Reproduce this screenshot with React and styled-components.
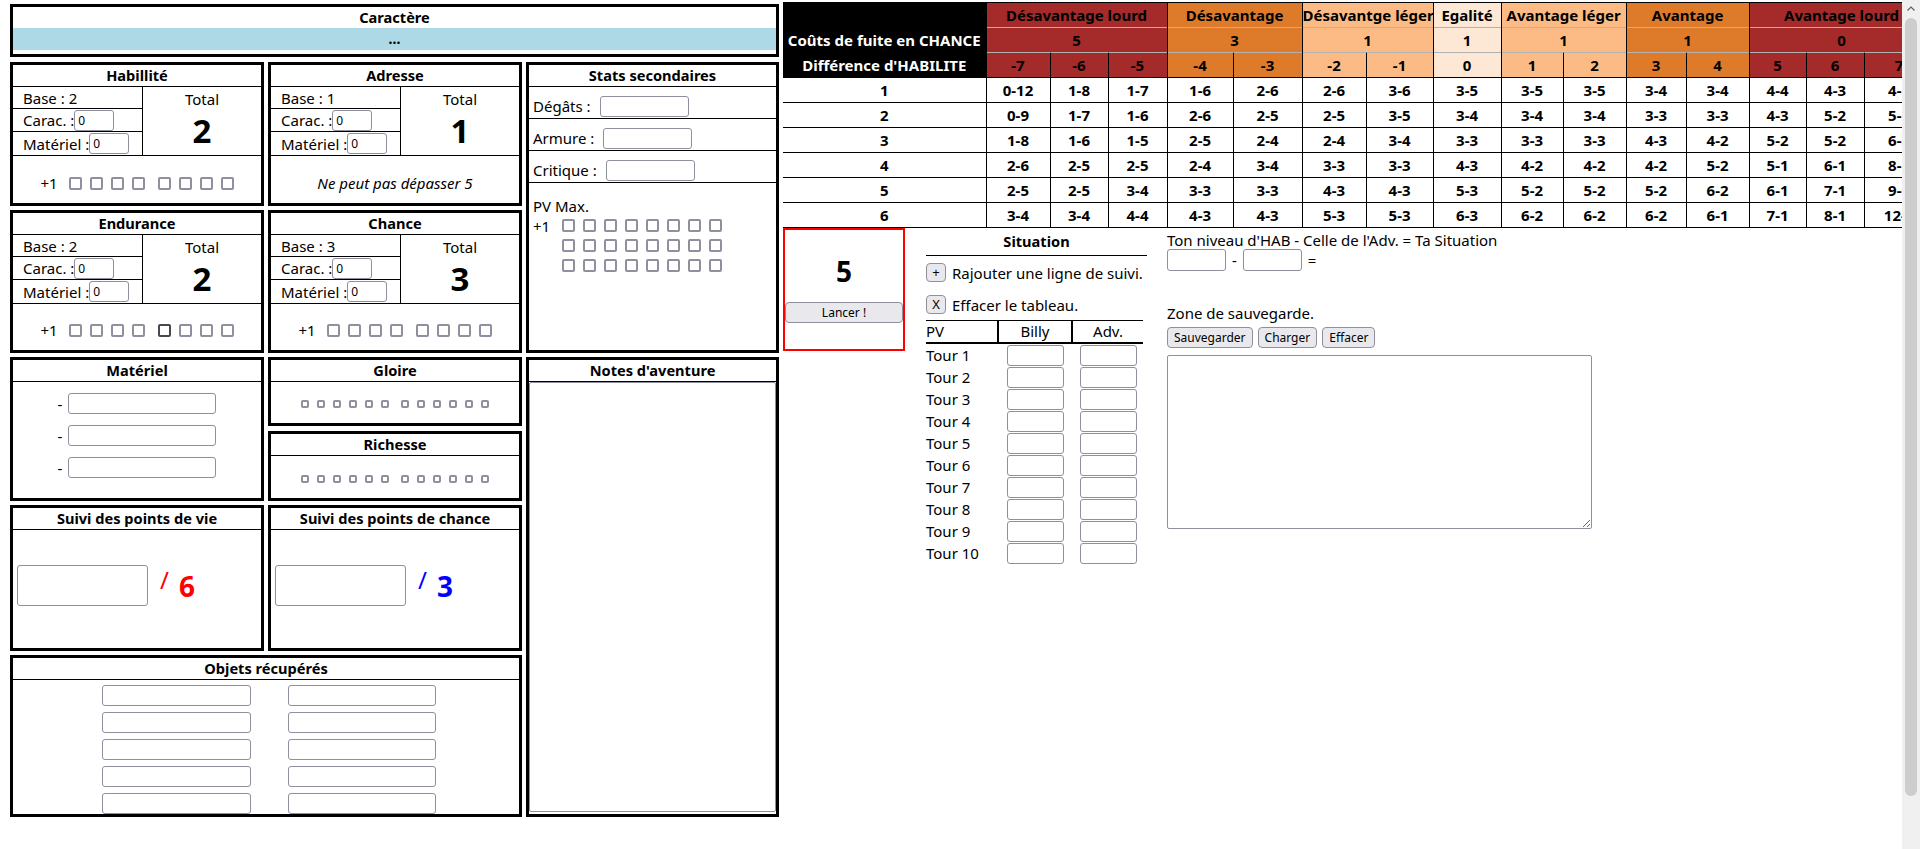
import React from "react";
import styled, { createGlobalStyle } from "styled-components";

const GlobalStyle = createGlobalStyle`
  html, body {
    margin: 0;
    padding: 0;
    background: #fff;
    overflow: hidden;
  }
  body {
    font-family: "Noto Sans", sans-serif;
    font-size: 15px;
    color: #000;
  }
  * {
    box-sizing: border-box;
  }
`;

const GREY = "#8f8f9d";

const Page = styled.div`
  display: flex;
  align-items: flex-start;
  padding-left: 10px;
  width: 1920px;
  height: 849px;
`;

const LeftCol = styled.div`
  flex: none;
  width: 769px;
  padding-top: 4px;
`;

const RightCol = styled.div`
  flex: 1;
  min-width: 0;
  margin-left: 4px;
  padding-top: 2px;
  overflow: hidden;
`;

/* ---------- fiche (left) ---------- */

const Panel = styled.div`
  border: 3px solid #000;
  display: flex;
  flex-direction: column;
  background: #fff;
  min-height: 0;
  ${(p) => p.$rows && `grid-row: span ${p.$rows};`}
  ${(p) => p.$cols && `grid-column: span ${p.$cols};`}
  ${(p) => p.$h && `height: ${p.$h}px; flex: none;`}
  ${(p) => p.$grow && `flex: 1;`}
`;

const Title = styled.div`
  flex: none;
  height: ${(p) => (p.$plain ? 21 : 22)}px;
  line-height: 21px;
  font-size: 14.6px;
  font-weight: 700;
  text-align: center;
  white-space: nowrap;
  border-bottom: ${(p) => (p.$plain ? "none" : "1px solid #000")};
`;

const CharName = styled.div`
  height: 22px;
  line-height: 22px;
  margin-bottom: 4px;
  background: #add8e6;
  text-align: center;
  font-size: 14px;
  font-weight: 700;
`;

const Sheet = styled.div`
  display: grid;
  grid-template-columns: 254px 254px 253px;
  grid-template-rows: 144px 143px 144px 146px 162px;
  gap: 4px;
  margin-top: 5px;
`;

const StatGrid = styled.div`
  flex: none;
  display: grid;
  grid-template-columns: 130px 1fr;
  border-bottom: 1px solid #000;
`;

const StatLines = styled.div`
  display: flex;
  flex-direction: column;
  border-right: 1px solid #000;
`;

const StatLine = styled.div`
  height: ${(p) => p.$h}px;
  display: flex;
  align-items: center;
  padding-left: 10px;
  white-space: nowrap;
  border-bottom: ${(p) => (p.$last ? "none" : "1px solid #000")};
`;

const TotalCell = styled.div`
  display: flex;
  flex-direction: column;
  align-items: center;
`;

const TotalLabel = styled.div`
  margin-top: 1px;
  line-height: 22px;
`;

const TotalValue = styled.div`
  margin-top: 3px;
  font-size: 33px;
  font-weight: 700;
  line-height: 36px;
`;

const Foot = styled.div`
  flex: 1;
  display: flex;
  align-items: center;
  justify-content: center;
  padding-top: ${(p) => (p.$pt === undefined ? 7 : p.$pt)}px;
`;

const Plus = styled.span`
  margin-right: 11px;
  line-height: 15px;
`;

const Checks = styled.div`
  display: flex;
  gap: ${(p) => p.$gap || 8}px;
`;

const Check = styled.span`
  flex: none;
  display: inline-block;
  width: ${(p) => p.$size || 13}px;
  height: ${(p) => p.$size || 13}px;
  border: 2px solid ${(p) => (p.$dark ? "#48484f" : GREY)};
  border-radius: 2px;
  margin-left: ${(p) => p.$split || 0}px;
`;

const Note = styled.span`
  font-style: italic;
`;

const Field = styled.input`
  width: ${(p) => p.$w}px;
  height: ${(p) => p.$h || 21}px;
  margin: 0;
  padding: 0 3px;
  border: 1px solid ${GREY};
  border-radius: 3px;
  background: #fff;
  font-family: "Noto Sans", sans-serif;
  font-size: 12px;
  color: #000;
  outline: none;
`;

const SecRow = styled.div`
  flex: none;
  height: 32px;
  display: flex;
  align-items: flex-end;
  padding: 0 0 1px 4px;
  border-bottom: 1px solid #000;
  line-height: 21px;
  white-space: nowrap;

  input {
    margin-left: ${(p) => p.$gap}px;
  }
`;

const PvArea = styled.div`
  padding: 13px 4px 0;
  line-height: 20px;
`;

const PvChecks = styled.div`
  display: flex;
  align-items: flex-start;
  margin-top: 3px;
`;

const PvPlus = styled.span`
  width: 29px;
  line-height: 15px;
`;

const CheckGrid = styled.div`
  display: grid;
  grid-template-columns: repeat(8, 13px);
  column-gap: 8px;
  row-gap: 7px;
`;

const MatList = styled.div`
  display: flex;
  flex-direction: column;
  align-items: center;
  gap: 11px;
  padding-top: 11px;
`;

const MatItem = styled.div`
  display: flex;
  align-items: center;
`;

const Dash = styled.span`
  margin-right: 6px;
`;

const Stack = styled.div`
  display: flex;
  flex-direction: column;
  gap: 5px;
`;

const Notes = styled.textarea`
  flex: 1;
  width: 100%;
  margin: 0 0 2px;
  border: 1px solid ${GREY};
  border-radius: 2px;
  resize: none;
  font-family: "Noto Sans", sans-serif;
`;

const Tracker = styled.div`
  flex: 1;
  display: flex;
  align-items: center;
  padding: 0 0 7px 4px;
  color: ${(p) => p.$color};
`;

const Slash = styled.span`
  margin: 0 0 12px 12px;
  font-size: 24px;
  line-height: 1;
`;

const Max = styled.span`
  margin-left: 10px;
  font-size: 28px;
  font-weight: 700;
  line-height: 1;
`;

const ObjGrid = styled.div`
  display: grid;
  grid-template-columns: 149px 148px;
  column-gap: 37px;
  row-gap: 6px;
  justify-content: center;
  padding: 5px 0 0 5px;
`;

/* ---------- table (right) ---------- */

const Chart = styled.table`
  border-collapse: collapse;
  table-layout: fixed;
  width: 1151px;
  font-size: 15px;
  font-weight: 700;
`;

const Cell = styled.td`
  height: 25px;
  padding: 0;
  text-align: center;
  white-space: nowrap;
  overflow: hidden;
  line-height: 20px;
  border: 1px solid #000;
  ${(p) => p.$soft && `border-bottom-color: rgba(0, 0, 0, 0.3);`}
  ${(p) => p.$first && `border-left: none;`}
  background: ${(p) => p.$bg || "#fff"};
  color: ${(p) => (p.$bg === "#000" ? "#fff" : "#000")};
`;

const Lower = styled.div`
  display: flex;
  align-items: flex-start;
`;

const DiceBox = styled.div`
  flex: none;
  width: 122px;
  height: 123px;
  border: 2px solid #f00;
  display: flex;
  flex-direction: column;
  align-items: center;
  padding-top: 24px;
`;

const DiceValue = styled.div`
  font-size: 28px;
  font-weight: 700;
  line-height: 34px;
`;

const Btn = styled.button`
  height: ${(p) => p.$h || 21}px;
  width: ${(p) => (p.$w ? `${p.$w}px` : "auto")};
  margin: 0;
  padding: ${(p) => (p.$w ? "0" : "0 6px")};
  background: #e9e9ed;
  border: 1px solid ${GREY};
  border-radius: 4px;
  font-family: "Noto Sans", sans-serif;
  font-size: ${(p) => p.$fs || 12}px;
  color: #000;
  line-height: 1;
`;

const Situation = styled.div`
  flex: none;
  width: 221px;
  margin-left: 21px;
`;

const SitTitle = styled.div`
  height: 28px;
  padding-top: 2px;
  line-height: 22px;
  font-size: 14.6px;
  font-weight: 700;
  text-align: center;
  border-bottom: 1px solid #000;
`;

const ActionRow = styled.div`
  display: flex;
  align-items: center;
  gap: 6px;
  height: 19px;
  margin-top: ${(p) => p.$mt}px;
  white-space: nowrap;
`;

const PvTable = styled.div`
  display: grid;
  grid-template-columns: 71px 74px 72px;
  width: 217px;
  margin-top: 6px;
  border-top: 1px solid #000;
`;

const HeadCell = styled.div`
  height: 23px;
  line-height: 21px;
  border-bottom: 2px solid #000;
  border-left: ${(p) => (p.$sep ? "2px solid #000" : "none")};
  text-align: ${(p) => (p.$sep ? "center" : "left")};
`;

const RowCell = styled.div`
  height: 22px;
  display: flex;
  align-items: center;
  justify-content: ${(p) => (p.$center ? "center" : "flex-start")};
  padding-left: ${(p) => (p.$center ? 2 : 0)}px;
  white-space: nowrap;
`;

const SideBlock = styled.div`
  margin-left: 20px;
  padding-top: 2px;
  line-height: 20px;
`;

const EqRow = styled.div`
  display: flex;
  align-items: center;
  gap: 6px;
  margin-top: -1px;
`;

const SaveLabel = styled.div`
  margin-top: 32px;
`;

const SaveBtns = styled.div`
  display: flex;
  gap: 5px;
  margin-top: 4px;
`;

const SaveArea = styled.textarea`
  display: block;
  width: 425px;
  height: 174px;
  margin: 7px 0 0;
  border: 1px solid ${GREY};
  border-radius: 2px;
  resize: both;
`;

/* ---------- browser scrollbar ---------- */

const ScrollBar = styled.div`
  position: fixed;
  top: 0;
  right: 0;
  width: 18px;
  height: 849px;
  background: #f0f0f0;
  display: flex;
  flex-direction: column;
  align-items: center;
`;

const ScrollArrow = styled.div`
  height: 16px;
  display: flex;
  align-items: center;
  justify-content: center;
`;

const ScrollThumb = styled.div`
  width: 12px;
  height: 778px;
  margin-top: 2px;
  background: #cdcdcd;
  border-radius: 6px;
`;

/* ---------- data ---------- */

const groups = [
  { name: "Désavantage lourd", cost: 5, span: 3, bg: "#a52a2a" },
  { name: "Désavantage", cost: 3, span: 2, bg: "#de7b2b" },
  { name: "Désavantge léger", cost: 1, span: 2, bg: "#fcbb84" },
  { name: "Egalité", cost: 1, span: 1, bg: "#fde8d6" },
  { name: "Avantage léger", cost: 1, span: 2, bg: "#fcbb84" },
  { name: "Avantage", cost: 1, span: 2, bg: "#de7b2b" },
  { name: "Avantage lourd", cost: 0, span: 3, bg: "#a52a2a" },
];

const colWidths = [203, 64, 58, 59, 66, 69, 64, 67, 68, 62, 63, 60, 63, 57, 58, 70];

const results = [
  ["0-12", "1-8", "1-7", "1-6", "2-6", "2-6", "3-6", "3-5", "3-5", "3-5", "3-4", "3-4", "4-4", "4-3", "4-3"],
  ["0-9", "1-7", "1-6", "2-6", "2-5", "2-5", "3-5", "3-4", "3-4", "3-4", "3-3", "3-3", "4-3", "5-2", "5-2"],
  ["1-8", "1-6", "1-5", "2-5", "2-4", "2-4", "3-4", "3-3", "3-3", "3-3", "4-3", "4-2", "5-2", "5-2", "6-2"],
  ["2-6", "2-5", "2-5", "2-4", "3-4", "3-3", "3-3", "4-3", "4-2", "4-2", "4-2", "5-2", "5-1", "6-1", "8-1"],
  ["2-5", "2-5", "3-4", "3-3", "3-3", "4-3", "4-3", "5-3", "5-2", "5-2", "5-2", "6-2", "6-1", "7-1", "9-0"],
  ["3-4", "3-4", "4-4", "4-3", "4-3", "5-3", "5-3", "6-3", "6-2", "6-2", "6-2", "6-1", "7-1", "8-1", "12-0"],
];

const diffCols = [];
groups.forEach((g) => {
  for (let i = 0; i < g.span; i++) diffCols.push(g.bg);
});

/* ---------- parts ---------- */

const EightChecks = ({ dark }) => (
  <Foot>
    <Plus>+1</Plus>
    <Checks>
      {Array.from({ length: 8 }).map((_, i) => (
        <Check key={i} $split={i === 4 ? 5 : 0} $dark={dark === i} />
      ))}
    </Checks>
  </Foot>
);

const StatBox = ({ name, base, total, children }) => (
  <Panel>
    <Title>{name}</Title>
    <StatGrid>
      <StatLines>
        <StatLine $h={22}>Base : {base}</StatLine>
        <StatLine $h={23}>
          Carac. :<Field $w={40} defaultValue="0" />
        </StatLine>
        <StatLine $h={23} $last>
          Matériel :<Field $w={40} defaultValue="0" />
        </StatLine>
      </StatLines>
      <TotalCell>
        <TotalLabel>Total</TotalLabel>
        <TotalValue>{total}</TotalValue>
      </TotalCell>
    </StatGrid>
    {children}
  </Panel>
);

const SmallChecks = () => (
  <Foot $pt={3}>
    <Checks $gap={8}>
      {Array.from({ length: 12 }).map((_, i) => (
        <Check key={i} $size={8} $split={i === 6 ? 4 : 0} />
      ))}
    </Checks>
  </Foot>
);

const Chevron = () => (
  <svg width="8" height="5" viewBox="0 0 8 5">
    <polyline points="0.5,4.5 4,1 7.5,4.5" fill="none" stroke="#606060" strokeWidth="1.2" />
  </svg>
);

const App = () => {
  return (
    <>
      <GlobalStyle />
      <Page>
        <LeftCol>
          <Panel $h={53}>
            <Title $plain>Caractère</Title>
            <CharName>...</CharName>
          </Panel>

          <Sheet>
            <StatBox name="Habillité" base={2} total={2}>
              <EightChecks />
            </StatBox>
            <StatBox name="Adresse" base={1} total={1}>
              <Foot>
                <Note>Ne peut pas dépasser 5</Note>
              </Foot>
            </StatBox>

            <Panel $rows={2}>
              <Title>Stats secondaires</Title>
              <SecRow $gap={9}>
                Dégâts :<Field $w={89} />
              </SecRow>
              <SecRow $gap={9}>
                Armure :<Field $w={89} />
              </SecRow>
              <SecRow $gap={9}>
                Critique :<Field $w={89} />
              </SecRow>
              <PvArea>
                PV Max.
                <PvChecks>
                  <PvPlus>+1</PvPlus>
                  <CheckGrid>
                    {Array.from({ length: 24 }).map((_, i) => (
                      <Check key={i} />
                    ))}
                  </CheckGrid>
                </PvChecks>
              </PvArea>
            </Panel>

            <StatBox name="Endurance" base={2} total={2}>
              <EightChecks dark={4} />
            </StatBox>
            <StatBox name="Chance" base={3} total={3}>
              <EightChecks />
            </StatBox>

            <Panel>
              <Title>Matériel</Title>
              <MatList>
                {[0, 1, 2].map((i) => (
                  <MatItem key={i}>
                    <Dash>-</Dash>
                    <Field $w={148} />
                  </MatItem>
                ))}
              </MatList>
            </Panel>

            <Stack>
              <Panel $h={69}>
                <Title>Gloire</Title>
                <SmallChecks />
              </Panel>
              <Panel $grow>
                <Title>Richesse</Title>
                <SmallChecks />
              </Panel>
            </Stack>

            <Panel $rows={3}>
              <Title>Notes d'aventure</Title>
              <Notes />
            </Panel>

            <Panel>
              <Title>Suivi des points de vie</Title>
              <Tracker $color="#f00">
                <Field $w={131} $h={41} />
                <Slash>/</Slash>
                <Max>6</Max>
              </Tracker>
            </Panel>
            <Panel>
              <Title>Suivi des points de chance</Title>
              <Tracker $color="#00f">
                <Field $w={131} $h={41} />
                <Slash>/</Slash>
                <Max>3</Max>
              </Tracker>
            </Panel>

            <Panel $cols={2}>
              <Title>Objets récupérés</Title>
              <ObjGrid>
                {Array.from({ length: 10 }).map((_, i) => (
                  <Field key={i} $w={i % 2 ? 148 : 149} />
                ))}
              </ObjGrid>
            </Panel>
          </Sheet>
        </LeftCol>

        <RightCol>
          <Chart>
            <colgroup>
              {colWidths.map((w, i) => (
                <col key={i} style={{ width: w }} />
              ))}
            </colgroup>
            <tbody>
              <tr>
                <Cell $bg="#000" $first />
                {groups.map((g) => (
                  <Cell key={g.name} colSpan={g.span} $bg={g.bg} $soft>
                    {g.name}
                  </Cell>
                ))}
              </tr>
              <tr>
                <Cell $bg="#000" $first>
                  Coûts de fuite en CHANCE
                </Cell>
                {groups.map((g) => (
                  <Cell key={g.name} colSpan={g.span} $bg={g.bg} $soft>
                    {g.cost}
                  </Cell>
                ))}
              </tr>
              <tr>
                <Cell $bg="#000" $first>
                  Différence d'HABILITE
                </Cell>
                {diffCols.map((bg, i) => (
                  <Cell key={i} $bg={bg}>
                    {i - 7}
                  </Cell>
                ))}
              </tr>
              {results.map((row, r) => (
                <tr key={r}>
                  <Cell $first>{r + 1}</Cell>
                  {row.map((v, i) => (
                    <Cell key={i}>{v}</Cell>
                  ))}
                </tr>
              ))}
            </tbody>
          </Chart>

          <Lower>
            <DiceBox>
              <DiceValue>5</DiceValue>
              <Btn $w={118} style={{ marginTop: 14 }}>
                Lancer !
              </Btn>
            </DiceBox>

            <Situation>
              <SitTitle>Situation</SitTitle>
              <ActionRow $mt={7}>
                <Btn $w={20} $h={19} $fs={13}>+</Btn>
                Rajouter une ligne de suivi.
              </ActionRow>
              <ActionRow $mt={13}>
                <Btn $w={20} $h={19} $fs={13}>X</Btn>
                Effacer le tableau.
              </ActionRow>
              <PvTable>
                <HeadCell>PV</HeadCell>
                <HeadCell $sep>Billy</HeadCell>
                <HeadCell $sep>Adv.</HeadCell>
                {Array.from({ length: 10 }).map((_, i) => (
                  <React.Fragment key={i}>
                    <RowCell>Tour {i + 1}</RowCell>
                    <RowCell $center>
                      <Field $w={57} />
                    </RowCell>
                    <RowCell $center>
                      <Field $w={57} />
                    </RowCell>
                  </React.Fragment>
                ))}
              </PvTable>
            </Situation>

            <SideBlock>
              <div>Ton niveau d'HAB - Celle de l'Adv. = Ta Situation</div>
              <EqRow>
                <Field $w={59} $h={22} />
                <span>-</span>
                <Field $w={59} $h={22} />
                <span>=</span>
              </EqRow>
              <SaveLabel>Zone de sauvegarde.</SaveLabel>
              <SaveBtns>
                <Btn>Sauvegarder</Btn>
                <Btn>Charger</Btn>
                <Btn>Effacer</Btn>
              </SaveBtns>
              <SaveArea />
            </SideBlock>
          </Lower>
        </RightCol>
      </Page>

      <ScrollBar>
        <ScrollArrow>
          <Chevron />
        </ScrollArrow>
        <ScrollThumb />
      </ScrollBar>
    </>
  );
};

export default App;
